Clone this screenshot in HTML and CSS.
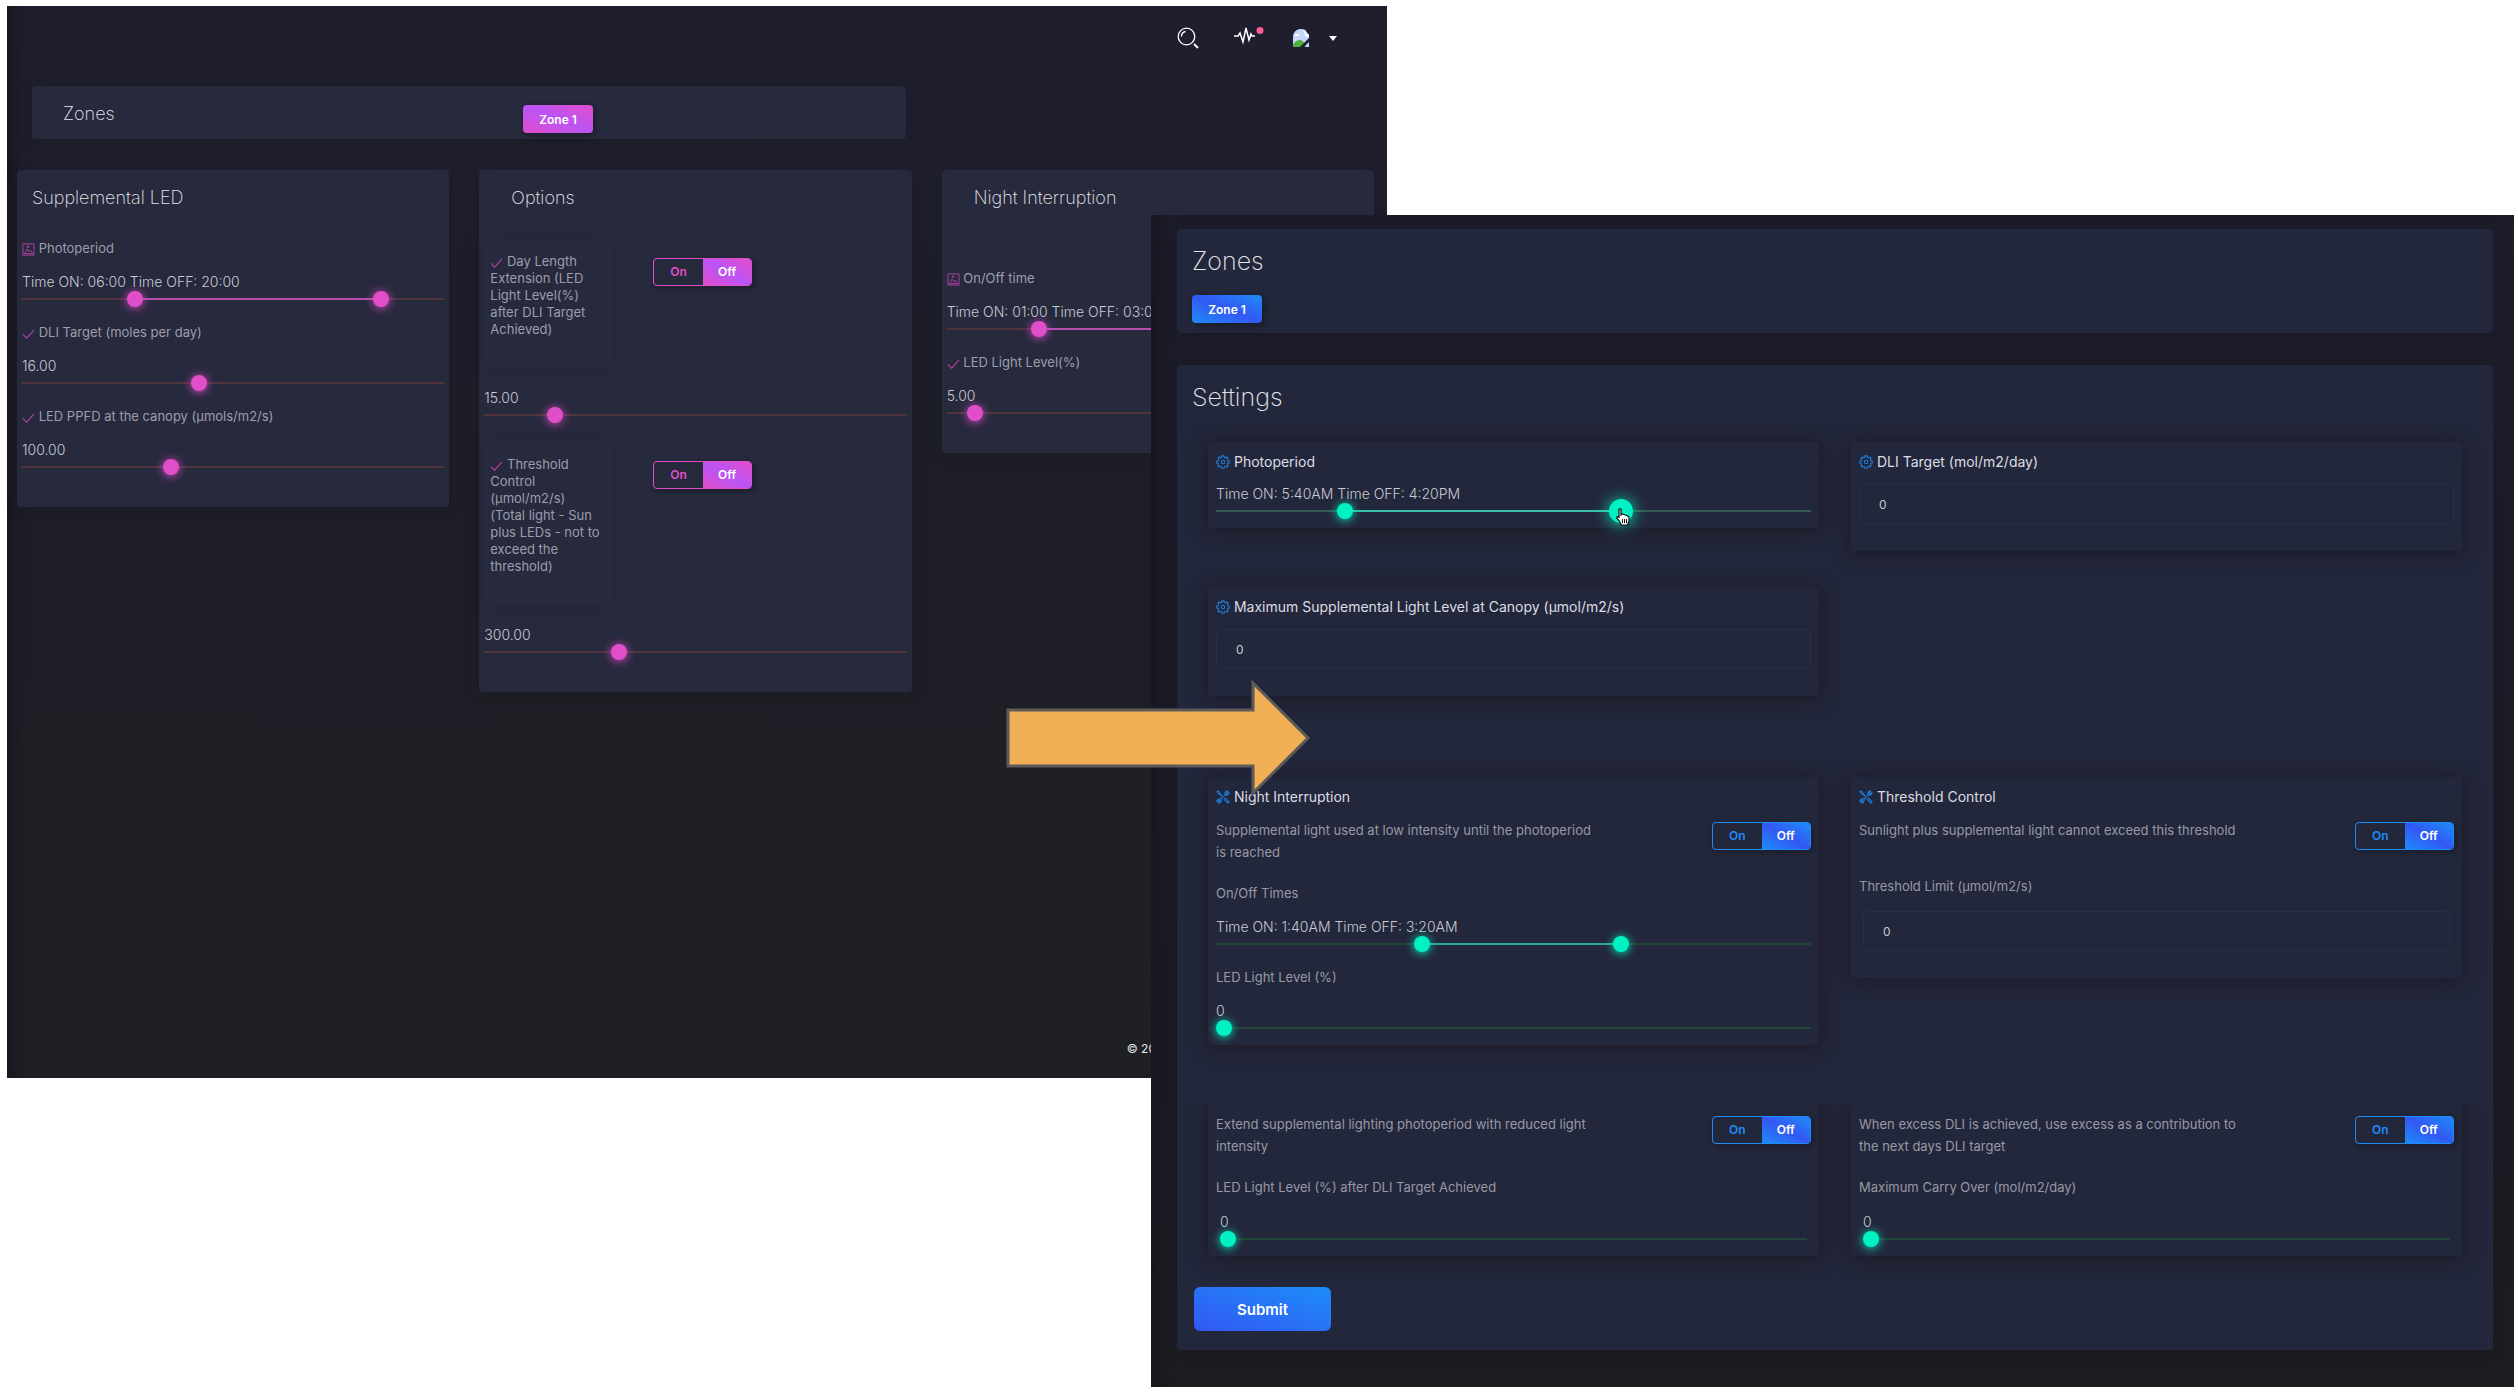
FILE: index.html
```html
<!DOCTYPE html>
<html lang="en">
<head>
<meta charset="utf-8">
<title>Lighting settings redesign</title>
<link rel="stylesheet" href="styles.css">
</head>
<body>
<svg class="defs" aria-hidden="true">
  <symbol id="i-check" viewBox="0 0 14 14"><path d="M1 8l4 4 8-9" fill="none" stroke="currentColor" stroke-width="1.1"/></symbol>
  <symbol id="i-image" viewBox="0 0 14 14"><g fill="none" stroke="currentColor"><path d="M1 1h12v12H1z"/><path d="M2.500 11.500l3-5 2 3 1.500-2 2.500 4z"/><circle cx="6.500" cy="4" r="1"/></g></symbol>
  <symbol id="i-gear" viewBox="0 0 16 16"><g fill="none" stroke="currentColor" stroke-width="1.200"><path d="M6.800 1h2.400l.4 1.700 1.300.5 1.500-.9 1.500 1.500-.9 1.500.5 1.400 1.700.4v2l-1.700.4-.5 1.400.9 1.500-1.500 1.500-1.500-.9-1.300.5-.4 1.700H6.800l-.4-1.700-1.300-.5-1.500.9-1.500-1.500.9-1.500-.5-1.400L.8 9.100v-2l1.700-.4L3 5.300l-.9-1.500 1.500-1.500 1.500.9 1.300-.5z"/><circle cx="8" cy="8" r="2"/></g></symbol>
  <symbol id="i-tools" viewBox="0 0 16 16"><g fill="none" stroke="currentColor" stroke-width="1.200" stroke-linejoin="round"><path d="M6.800 7.200L4.300 4.800 2.500 4 1 1.800 1.800 1 4 2.500l.8 1.800 2.400 2.500M9.300 10.700l1.400-1.400 4.300 4.200-1.500 1.500z"/><path d="M10.300 5.700c-.9-2.600.8-4.900 3.200-4.600l-2 2 .2 1.200 1.200.2 2-2c.4 2.400-1.900 4.100-4.600 3.200L5.700 10.300c.9 2.600-.8 4.900-3.200 4.600l2-2-.2-1.200-1.200-.2-2 2c-.4-2.400 1.900-4.100 4.600-3.200z"/></g></symbol>
</svg>
<main class="stage">

  <section class="window old" aria-label="Previous design">
    <header class="topbar">
      <button class="icon-btn search" aria-label="Search"><svg width="22" height="22" viewBox="0 0 22 22"><g fill="none" stroke="#fff" stroke-width="1.300"><circle cx="9.500" cy="9.500" r="8.300"/><path d="M17 17l4 4" stroke-width="2"/><path d="M4.500 9.500a5 5 0 0 1 4-5"/></g></svg></button>
      <button class="icon-btn pulse" aria-label="Activity"><svg width="30" height="22" viewBox="0 0 30 22"><path d="M0 9h4l2-3 3 9 3-14 3 12 2-6 1 2h3" fill="none" stroke="#fff" stroke-width="1.500"/><circle cx="26" cy="3.500" r="3.500" fill="#fd5d93"/></svg></button>
      <button class="icon-btn user" aria-label="Account"><svg width="18" height="18" viewBox="0 0 18 18"><clipPath id="av"><path d="M1 18V8a8 8 0 0 1 12-7l4 5v12z"/></clipPath><g clip-path="url(#av)"><path d="M0 0h18v18H0z" fill="#c5d6f8"/><path d="M2 7q2-3 5-2v2z" fill="#fff"/><path d="M0 18q3-7 8-7 4 0 6 7z" fill="#4fae36"/><path d="M8 18L18 8v4l-6 6z" fill="#1e1e2f"/><path d="M11 1h3v4h4v3h-4z" fill="#fff"/></g></svg><svg class="caret" width="8" height="5" viewBox="0 0 8 5"><path d="M0 0h8L4 5z" fill="#fff"/></svg></button>
    </header>

    <div class="card zone-bar">
      <h2>Zones</h2>
      <button class="zone-btn">Zone 1</button>
    </div>

    <div class="columns">
      <div class="card col">
        <h2>Supplemental LED</h2>
        <p class="label"><svg><use href="#i-image"/></svg> Photoperiod</p>
        <output class="value">Time ON: 06:00 Time OFF: 20:00</output>
        <div class="slider" style="--from:27%;--to:85%">
          <input type="range" max="1000" value="259" aria-label="Photoperiod on">
          <input type="range" max="1000" value="864" aria-label="Photoperiod off">
        </div>
        <label class="label" for="dli"><svg><use href="#i-check"/></svg> DLI Target (moles per day)</label>
        <output class="value">16.00</output>
        <div class="slider"><input id="dli" type="range" max="1000" value="415"></div>
        <label class="label" for="ppfd"><svg><use href="#i-check"/></svg> LED PPFD at the canopy (μmols/m2/s)</label>
        <output class="value">100.00</output>
        <div class="slider"><input id="ppfd" type="range" max="1000" value="346"></div>
      </div>

      <div class="card col options">
        <h2>Options</h2>
        <div class="option">
          <label class="option-label" for="ext"><svg><use href="#i-check"/></svg> Day Length Extension (LED Light Level(%) after DLI Target Achieved)</label>
          <div class="option-toggle"><div class="toggle" role="radiogroup" aria-label="Day length extension">
            <input type="radio" name="o1" id="o1a"><label for="o1a">On</label><input type="radio" name="o1" id="o1b" checked><label for="o1b">Off</label>
          </div></div>
        </div>
        <output class="value">15.00</output>
        <div class="slider"><input id="ext" type="range" max="1000" value="154"></div>
        <div class="option">
          <label class="option-label" for="thr"><svg><use href="#i-check"/></svg> Threshold Control (μmol/m2/s) (Total light - Sun plus LEDs - not to exceed the threshold)</label>
          <div class="option-toggle"><div class="toggle" role="radiogroup" aria-label="Threshold control">
            <input type="radio" name="o2" id="o2a"><label for="o2a">On</label><input type="radio" name="o2" id="o2b" checked><label for="o2b">Off</label>
          </div></div>
        </div>
        <output class="value">300.00</output>
        <div class="slider"><input id="thr" type="range" max="1000" value="311"></div>
      </div>

      <div class="card col night">
        <h2>Night Interruption</h2>
        <p class="label"><svg><use href="#i-image"/></svg> On/Off time</p>
        <output class="value">Time ON: 01:00 Time OFF: 03:00</output>
        <div class="slider" style="--from:22%;--to:62%">
          <input type="range" max="1000" value="207" aria-label="Night on">
          <input type="range" max="1000" value="620" aria-label="Night off">
        </div>
        <label class="label" for="nl"><svg><use href="#i-check"/></svg> LED Light Level(%)</label>
        <output class="value">5.00</output>
        <div class="slider"><input id="nl" type="range" max="1000" value="50"></div>
      </div>
    </div>
    <footer class="footer">© 20</footer>
  </section>

  <section class="window new" aria-label="New design">
    <div class="card zones">
      <h1>Zones</h1>
      <button class="zone-btn">Zone 1</button>
    </div>

    <form class="card settings">
      <h1>Settings</h1>
      <div class="grid">
        <div class="box">
          <h3><svg><use href="#i-gear"/></svg> Photoperiod</h3>
          <output class="value">Time ON: 5:40AM Time OFF: 4:20PM</output>
          <div class="slider strong" style="--from:22%;--to:68%">
            <input type="range" max="1000" value="209" aria-label="Photoperiod on">
            <input class="active" type="range" max="1000" value="688" aria-label="Photoperiod off">
            <svg class="cursor" width="16" height="18" viewBox="0 0 16 18"><path d="M4 1h2v6l1-1 2 .5 1 .5 2 .5 2 1.500v4l-1.500 4H6.500L4 12.500 1.500 10l1-1.500L4 9.500z" fill="#fff" stroke="#111" stroke-width="1.200"/><path d="M7.500 11v4M9.500 11v4M11.500 11v4" stroke="#111"/></svg>
          </div>
        </div>
        <div class="box entry">
          <h3><label for="n1"><svg><use href="#i-gear"/></svg> DLI Target (mol/m2/day)</label></h3>
          <input class="field" id="n1" type="text" value="0">
        </div>
      </div>
      <div class="grid second">
        <div class="box entry">
          <h3><label for="n2"><svg><use href="#i-gear"/></svg> Maximum Supplemental Light Level at Canopy (μmol/m2/s)</label></h3>
          <input class="field" id="n2" type="text" value="0">
        </div>
      </div>
      <div class="grid third">
        <div class="box">
          <h3><svg><use href="#i-tools"/></svg> Night Interruption</h3>
          <div class="desc">
            <p>Supplemental light used at low intensity until the photoperiod is reached</p>
            <div class="toggle" role="radiogroup" aria-label="Night interruption">
              <input type="radio" name="t1" id="t1a"><label for="t1a">On</label><input type="radio" name="t1" id="t1b" checked><label for="t1b">Off</label>
            </div>
          </div>
          <p class="sub">On/Off Times</p>
          <output class="value">Time ON: 1:40AM Time OFF: 3:20AM</output>
          <div class="slider" style="--from:35%;--to:68%">
            <input type="range" max="1000" value="342" aria-label="Night on">
            <input type="range" max="1000" value="686" aria-label="Night off">
          </div>
          <label class="sub" for="n3">LED Light Level (%)</label>
          <output class="value">0</output>
          <div class="slider"><input id="n3" type="range" max="1000" value="0"></div>
        </div>
        <div class="box entry">
          <h3><svg><use href="#i-tools"/></svg> Threshold Control</h3>
          <div class="desc">
            <p>Sunlight plus supplemental light cannot exceed this threshold</p>
            <div class="toggle" role="radiogroup" aria-label="Threshold control">
              <input type="radio" name="t2" id="t2a"><label for="t2a">On</label><input type="radio" name="t2" id="t2b" checked><label for="t2b">Off</label>
            </div>
          </div>
          <label class="sub" for="n4">Threshold Limit (μmol/m2/s)</label>
          <div class="inset"><input class="field" id="n4" type="text" value="0"></div>
        </div>
      </div>
      <div class="grid fourth">
        <div class="box">
          <div class="desc">
            <p>Extend supplemental lighting photoperiod with reduced light intensity</p>
            <div class="toggle" role="radiogroup" aria-label="Extend photoperiod">
              <input type="radio" name="t3" id="t3a"><label for="t3a">On</label><input type="radio" name="t3" id="t3b" checked><label for="t3b">Off</label>
            </div>
          </div>
          <label class="sub" for="n5">LED Light Level (%) after DLI Target Achieved</label>
          <div class="inset">
            <output class="value">0</output>
            <div class="slider"><input id="n5" type="range" max="1000" value="0"></div>
          </div>
        </div>
        <div class="box">
          <div class="desc">
            <p>When excess DLI is achieved, use excess as a contribution to the next days DLI target</p>
            <div class="toggle" role="radiogroup" aria-label="Carry over">
              <input type="radio" name="t4" id="t4a"><label for="t4a">On</label><input type="radio" name="t4" id="t4b" checked><label for="t4b">Off</label>
            </div>
          </div>
          <label class="sub" for="n6">Maximum Carry Over (mol/m2/day)</label>
          <div class="inset">
            <output class="value">0</output>
            <div class="slider"><input id="n6" type="range" max="1000" value="0"></div>
          </div>
        </div>
      </div>
      <button class="submit" type="button">Submit</button>
    </form>

    <svg class="arrow" width="306" height="120" viewBox="0 0 306 120" aria-hidden="true"><path d="M3 31h245V4l55 55-55 55V87H3z" fill="#f1af56" stroke="#5c5b58" stroke-width="3"/></svg>
  </section>
</main>
</body>
</html>
```
FILE: styles.css
```css
* { box-sizing: border-box; }
body { margin: 0; background: #fff; font-family: Inter, "Open Sans", sans-serif; }
h1, h2, h3, p { margin: 0; font-weight: 400; }
button { font: inherit; border: 0; cursor: pointer; }
.defs { display: none; }

/* Two overlapping windows share the middle column */
.stage {
  display: grid;
  grid-template-columns: 1144fr 236fr 1127fr;
  grid-template-rows: 209px auto;
  padding: 6px 4px 5px 7px;
}
.window { display: flex; flex-direction: column; color: #d3d4da; }
.old {
  --accent: #e14eca; --accent2: #ba54f5; --track: #51353e; --fill: #b94cae; --thumb: #e14eca;
  grid-area: 1 / 1 / 3 / 3;
  align-self: start;
  min-height: 1072px;
  padding: 0 13px 17px 10px;
  background: linear-gradient(#1e1e2f, #1e1e26 60%, #1f2024);
  box-shadow: inset 14px 0 14px -8px #17171f;
}
.new {
  --accent: #1d8cf8; --accent2: #3358f4; --track: #234439; --fill: #2fa697; --thumb: #00f2c3;
  grid-area: 2 / 2 / 3 / 4;
  position: relative;
  z-index: 2;
  padding: 14px 21px 37px 26px;
  background: linear-gradient(#1c1c2b, #1c1b27 50%, #1c1c21);
  box-shadow: inset 14px 0 14px -8px #17171f;
}
.card { border-radius: 4px; box-shadow: 0 1px 20px 0 rgba(0, 0, 0, .1); }
.old .card { background: #27293d; }
.new .card { background: #23273b; }

.topbar { display: flex; justify-content: flex-end; align-items: center; height: 64px; padding-right: 37px; }
.icon-btn { display: flex; align-items: center; padding: 0; background: none; }
.pulse { margin-left: 35px; }
.user { margin-left: 28px; gap: 19px; }

h2 { font-size: 18px; line-height: 24px; font-weight: 200; color: #e6e7eb; }
h1 { font-size: 25px; line-height: 32px; font-weight: 200; color: #e6e7eb; }

.zone-bar {
  display: grid; grid-template-columns: 460px auto; justify-content: start;
  width: 874px; max-width: 100%; margin: 16px 0 31px 15px; padding: 16px 31px 0; height: 53px;
}
.zone-btn {
  height: 28px; width: 70px; padding: 0; border-radius: 4px; color: #fff;
  font-size: 12px; font-weight: 600;
  background: linear-gradient(to bottom left, var(--accent), var(--accent2), var(--accent));
  box-shadow: 2px 2px 6px rgba(0, 0, 0, .4);
}
.zone-bar .zone-btn { margin-top: 3px; }

.columns { display: grid; grid-template-columns: repeat(3, 1fr); gap: 30px; align-items: start; }
.col { padding: 16px 5px 32px; }
.col h2 { padding-left: 10px; margin-bottom: 28px; }
.options h2, .night h2 { padding-left: 27px; }
.night h2 { margin-bottom: 58px; }
.label { display: block; font-size: 13px; line-height: 20px; color: #9c9eab; margin-bottom: 15px; }
.label svg, .option-label svg { width: 13px; height: 13px; vertical-align: -3px; color: #b343a6; }
.value { display: block; font-size: 14px; line-height: 18px; font-weight: 300; color: #c8cad3; white-space: nowrap; }
h3 + .value { padding-top: 1px; }

.slider { position: relative; display: grid; height: 16px; margin-bottom: 15px; align-items: center; }
.slider:last-child { margin-bottom: 0; }
.slider::before, .slider::after { content: ""; position: absolute; top: 7px; height: 2px; left: 0; right: 0; background: var(--track); }
.slider::after { left: var(--from, 0%); right: calc(100% - var(--to, 0%)); background: var(--fill); }
.slider input {
  grid-area: 1 / 1; z-index: 1; width: 100%; height: 16px; margin: 0; appearance: none;
  background: none; pointer-events: none;
}
.slider input::-webkit-slider-thumb {
  appearance: none; width: 16px; height: 16px; border-radius: 50%; pointer-events: auto;
  background: var(--thumb); box-shadow: 0 1px 10px var(--thumb);
}
.slider input.active::-webkit-slider-thumb { width: 24px; height: 24px; box-shadow: 0 1px 16px var(--thumb); }
.strong { --track: #345a4f; --fill: #37c2ae; }
.cursor { position: absolute; z-index: 2; left: 67%; top: 5px; }

.option { display: flex; align-items: flex-start; margin-bottom: 21px; }
.slider + .option { margin-top: 18px; }
.option-label {
  width: 128px; padding: 15px 10px 30px 6px; font-size: 13px; line-height: 17px; color: #9c9eab;
  box-shadow: 0 1px 20px 0 rgba(0, 0, 0, .1);
}
.option-toggle { margin-left: 20px; padding: 20px 10px 15px 21px; }

.toggle {
  display: grid; grid-template-columns: 1fr 1fr; flex: none; width: 99px; height: 28px;
  border: 1px solid var(--accent); border-radius: 4px; overflow: hidden;
  font-size: 12px; font-weight: 600; line-height: 26px; text-align: center; color: var(--accent);
  box-shadow: 2px 2px 6px rgba(0, 0, 0, .3);
}
.toggle input { position: absolute; opacity: 0; pointer-events: none; }
.toggle input:checked + label { color: #fff; background: linear-gradient(to bottom left, var(--accent), var(--accent2), var(--accent)); }

.footer { margin-top: auto; padding-right: 218px; font-size: 12px; line-height: 24px; text-align: right; color: #e3e3e6; }

.zones { padding: 16px 15px 10px; margin-bottom: 32px; }
.zones h1 { margin-bottom: 18px; }
.zones .zone-btn { display: block; }
.settings { padding: 16px 31px 19px; }
.settings h1 { margin: 0 0 29px -16px; }
.grid { display: grid; grid-template-columns: 1fr 1fr; gap: 32px; align-items: start; margin-bottom: 36px; }
.second { margin-bottom: 81px; }
.third { margin-bottom: 58px; }
.fourth { margin-bottom: 31px; }
.box { padding: 10px 8px 9px; border-radius: 4px; background: #23273b; box-shadow: 0 2px 18px 2px rgba(28, 22, 32, .75); }
.entry { padding-bottom: 27px; }
.fourth .box { padding-top: 10px; clip-path: inset(0 -30px -30px -30px); }
h3 { font-size: 14px; line-height: 20px; margin-bottom: 12px; color: #dcdde3; }
h3 svg { width: 14px; height: 14px; vertical-align: -2px; color: #1d7fe2; }
.field {
  display: block; width: 100%; height: 40px; padding: 0 19px; border: 1px solid #2b3048; border-radius: 6px;
  background: none; color: #c8cad3; font: 400 12px/20px Inter, sans-serif; outline: 0;
}
.desc { display: flex; justify-content: space-between; align-items: flex-start; min-height: 37px; margin-bottom: 20px; }
.desc p { width: 64%; font-size: 13px; line-height: 22px; color: #9899a5; }
.desc .toggle { margin-top: 3px; }
.sub { display: block; font-size: 13px; line-height: 20px; color: #9899a5; margin-bottom: 15px; }
.fourth .sub { margin-bottom: 16px; }
.inset { padding: 0 4px; }
.submit {
  display: block; width: 137px; height: 44px; margin-left: -14px; border-radius: 6px; color: #fff;
  font-size: 15px; font-weight: 600; background: linear-gradient(to bottom left, #1d8cf8, #3358f4);
}
.arrow { position: absolute; left: -146px; top: 464px; z-index: 3; }
```
